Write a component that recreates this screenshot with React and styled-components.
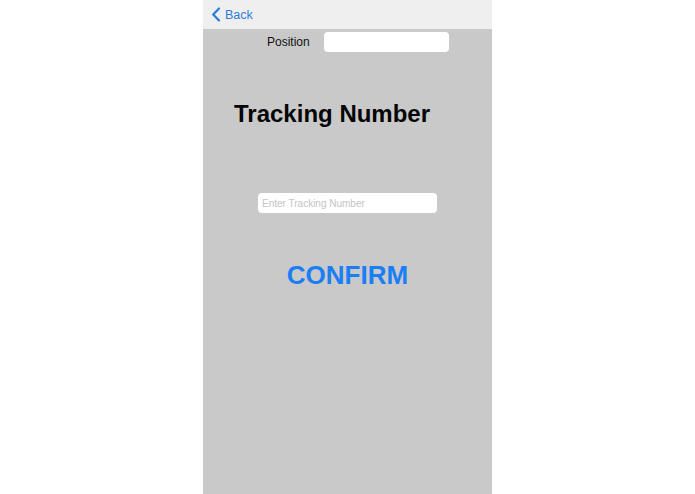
import React from "react";
import styled, { createGlobalStyle } from "styled-components";

const Global = createGlobalStyle`
  html, body, #root { margin: 0; padding: 0; height: 100%; }
  body { background: #ffffff; font-family: "Liberation Sans", Arial, sans-serif; }
`;

const Page = styled.div`
  display: flex;
  justify-content: center;
  height: 100vh;
`;

const Phone = styled.div`
  width: 289px;
  background: #c9c9c9;
  display: flex;
  flex-direction: column;
`;

const NavBar = styled.div`
  height: 29px;
  background: #efefef;
  display: flex;
  align-items: center;
  padding-left: 8px;
  box-sizing: border-box;
`;

const BackButton = styled.button`
  display: flex;
  align-items: center;
  gap: 4px;
  background: none;
  border: none;
  padding: 0;
  color: #2a7cdc;
  font-family: "Liberation Sans", Arial, sans-serif;
  font-size: 12.5px;
  cursor: pointer;
`;

const Row = styled.div`
  display: flex;
  align-items: center;
  height: 20px;
  margin-top: 3px;
  padding-left: 64px;
`;

const Label = styled.span`
  width: 57px;
  font-size: 12px;
  color: #111;
`;

const Field = styled.input`
  box-sizing: border-box;
  width: ${(p) => p.$w}px;
  height: 20px;
  margin-left: ${(p) => p.$ml || 0}px;
  margin-top: ${(p) => p.$mt || 0}px;
  border: none;
  border-radius: 4px;
  background: #ffffff;
  padding: 0 4px;
  font-family: "Liberation Sans", Arial, sans-serif;
  font-size: 10px;
  color: #222;
  outline: none;
  &::placeholder { color: #c4c4c4; }
`;

const Title = styled.h1`
  margin: 48px 0 0 31px;
  font-size: 24px;
  line-height: 28px;
  font-weight: 700;
  color: #050505;
`;

const Confirm = styled.button`
  align-self: center;
  margin-top: 47px;
  background: none;
  border: none;
  padding: 0;
  font-family: "Liberation Sans", Arial, sans-serif;
  font-size: 26px;
  line-height: 30px;
  font-weight: 700;
  color: #1a7ef4;
  cursor: pointer;
`;

export default function App() {
  return (
    <>
      <Global />
      <Page>
        <Phone>
          <NavBar>
            <BackButton>
              <svg width="10" height="15" viewBox="0 0 10 15" fill="none">
                <path d="M8 1.5 L2.2 7.5 L8 13.5" stroke="#2a7cdc" strokeWidth="2.2" strokeLinecap="round" strokeLinejoin="round" />
              </svg>
              Back
            </BackButton>
          </NavBar>
          <Row>
            <Label>Position</Label>
            <Field $w={125} />
          </Row>
          <Title>Tracking Number</Title>
          <Field $w={179} $ml={55} $mt={65} placeholder="Enter Tracking Number" />
          <Confirm>CONFIRM</Confirm>
        </Phone>
      </Page>
    </>
  );
}
